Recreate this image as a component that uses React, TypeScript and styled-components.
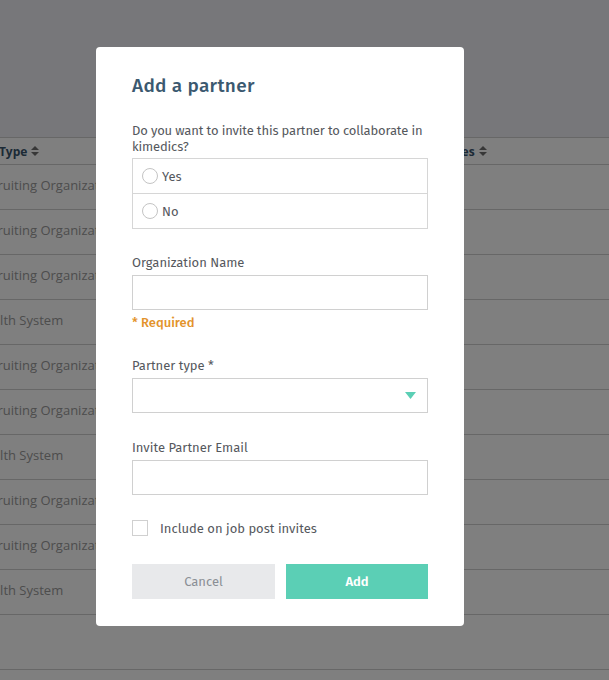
import React, { useState } from 'react';
import styled, { createGlobalStyle } from 'styled-components';

const GlobalStyle = createGlobalStyle`
  html, body {
    margin: 0;
    padding: 0;
    background: #eeeff4;
  }
  body {
    font-family: 'Open Sans', sans-serif;
    overflow: hidden;
  }
`;

const Page = styled.div`
  width: 609px;
  height: 680px;
  overflow: hidden;
  display: flex;
  flex-direction: column;
`;

const TopArea = styled.div`
  height: 137px;
  flex-shrink: 0;
  background: #eeeff4;
`;

const Table = styled.div`
  background: #ffffff;
  margin-left: -24px;
  width: 700px;
  flex: 1;
`;

const Row = styled.div<{ $head?: boolean; $tall?: boolean }>`
  display: grid;
  grid-template-columns: 240px 220px 1fr;
  align-items: center;
  height: ${(p) => (p.$head ? '26px' : p.$tall ? '54px' : '44px')};
  border-top: 1px solid #cfcfcf;
  ${(p) => (p.$tall ? 'border-bottom: 1px solid #cfcfcf;' : '')}
`;

const Cell = styled.div<{ $head?: boolean }>`
  font-size: ${(p) => (p.$head ? '12px' : '13px')};
  font-weight: ${(p) => (p.$head ? 700 : 400)};
  color: ${(p) => (p.$head ? '#38546c' : '#9a9a9a')};
  white-space: nowrap;
  display: flex;
  align-items: center;
  gap: 4px;
  margin-left: ${(p) => (p.$head ? '-2px' : '0')};
  padding-bottom: ${(p) => (p.$head ? '0' : '5px')};
`;

const SortIcon = () => (
  <svg width="8" height="10" viewBox="0 0 8 10">
    <path d="M4 0 L8 4 H0 Z" fill="#6f6f6f" />
    <path d="M4 10 L8 6 H0 Z" fill="#6f6f6f" />
  </svg>
);

const Overlay = styled.div`
  position: fixed;
  inset: 0;
  background: rgba(0, 0, 0, 0.5);
  padding: 47px 0 0 96px;
  box-sizing: border-box;
`;

const Modal = styled.div`
  width: 368px;
  height: 579px;
  box-sizing: border-box;
  background: #ffffff;
  border-radius: 4px;
  padding: 27px 36px 0 36px;
  font-family: 'Fira Sans', 'Roboto', sans-serif;
`;

const Title = styled.h2`
  margin: 0 0 25px;
  font-size: 19px;
  font-weight: 500;
  color: #3b5970;
  letter-spacing: 0.3px;
  line-height: 24px;
`;

const Question = styled.div`
  font-size: 13px;
  font-weight: 400;
  color: #55585d;
  line-height: 16px;
  letter-spacing: -0.15px;
  margin-bottom: 3px;
`;

const RadioGroup = styled.div`
  border: 1px solid #d6d6d6;
  display: flex;
  flex-direction: column;
`;

const RadioRow = styled.label<{ $last?: boolean }>`
  height: 34px;
  display: flex;
  align-items: center;
  gap: 4px;
  padding-left: 9px;
  font-size: 13px;
  color: #55585d;
  cursor: pointer;
  ${(p) => (p.$last ? '' : 'border-bottom: 1px solid #d6d6d6;')}
`;

const RadioCircle = styled.span<{ $on?: boolean }>`
  width: 14px;
  height: 14px;
  border-radius: 50%;
  border: 1px solid #c4c4c4;
  box-sizing: content-box;
  background: ${(p) => (p.$on ? '#5bcfb5' : '#fff')};
`;

const Field = styled.div<{ $top: number }>`
  margin-top: ${(p) => p.$top}px;
  display: flex;
  flex-direction: column;
`;

const Label = styled.div`
  font-size: 13px;
  font-weight: 400;
  color: #55585d;
  line-height: 16px;
  margin-bottom: 4px;
`;

const Input = styled.input`
  height: 35px;
  box-sizing: border-box;
  border: 1px solid #d0d0d0;
  outline: none;
  padding: 0 10px;
  font-size: 13px;
  font-family: inherit;
`;

const Required = styled.div`
  margin-top: 5px;
  font-size: 13px;
  font-weight: 500;
  color: #e3932b;
  line-height: 16px;
`;

const SelectBox = styled.div`
  height: 35px;
  box-sizing: border-box;
  border: 1px solid #d0d0d0;
  display: flex;
  align-items: center;
  justify-content: flex-end;
  padding-right: 11px;
`;

const Caret = () => (
  <svg width="11" height="7" viewBox="0 0 11 7">
    <path d="M0 0 H11 L5.5 7 Z" fill="#5bcfb5" />
  </svg>
);

const CheckRow = styled.label`
  margin-top: 25px;
  display: flex;
  align-items: center;
  gap: 12px;
  font-size: 13px;
  font-weight: 400;
  color: #55585d;
  cursor: pointer;
`;

const CheckBox = styled.span`
  width: 14px;
  height: 14px;
  border: 1px solid #d0d0d0;
  box-sizing: content-box;
`;

const Buttons = styled.div`
  margin-top: 28px;
  display: grid;
  grid-template-columns: 143px 142px;
  justify-content: space-between;
`;

const Button = styled.button<{ $primary?: boolean }>`
  height: 35px;
  border: 0;
  font-family: inherit;
  font-size: 13px;
  font-weight: ${(p) => (p.$primary ? 600 : 400)};
  color: ${(p) => (p.$primary ? '#ffffff' : '#8b8f95')};
  background: ${(p) => (p.$primary ? '#5bcfb5' : '#e8e9eb')};
  cursor: pointer;
`;

const rows = [
  'Recruiting Organization',
  'Recruiting Organization',
  'Recruiting Organization',
  'Health System',
  'Recruiting Organization',
  'Recruiting Organization',
  'Health System',
  'Recruiting Organization',
  'Recruiting Organization',
  'Health System',
];

export default function App() {
  const [choice, setChoice] = useState<string | null>(null);
  return (
    <>
      <GlobalStyle />
      <Page>
        <TopArea />
        <Table>
          <Row $head>
            <Cell $head>Org Type <SortIcon /></Cell>
            <Cell $head />
            <Cell $head>Invites <SortIcon /></Cell>
          </Row>
          {rows.map((r, i) => (
            <Row key={i}>
              <Cell>{r}</Cell>
              <Cell />
              <Cell />
            </Row>
          ))}
          <Row $tall>
            <Cell />
            <Cell />
            <Cell />
          </Row>
        </Table>
      </Page>
      <Overlay>
        <Modal>
          <Title>Add a partner</Title>
          <Question>Do you want to invite this partner to collaborate in kimedics?</Question>
          <RadioGroup>
            <RadioRow onClick={() => setChoice('yes')}>
              <RadioCircle $on={choice === 'yes'} />
              Yes
            </RadioRow>
            <RadioRow $last onClick={() => setChoice('no')}>
              <RadioCircle $on={choice === 'no'} />
              No
            </RadioRow>
          </RadioGroup>
          <Field $top={26}>
            <Label>Organization Name</Label>
            <Input />
            <Required>* Required</Required>
          </Field>
          <Field $top={27}>
            <Label>Partner type *</Label>
            <SelectBox>
              <Caret />
            </SelectBox>
          </Field>
          <Field $top={27}>
            <Label>Invite Partner Email</Label>
            <Input />
          </Field>
          <CheckRow>
            <CheckBox />
            Include on job post invites
          </CheckRow>
          <Buttons>
            <Button>Cancel</Button>
            <Button $primary>Add</Button>
          </Buttons>
        </Modal>
      </Overlay>
    </>
  );
}
